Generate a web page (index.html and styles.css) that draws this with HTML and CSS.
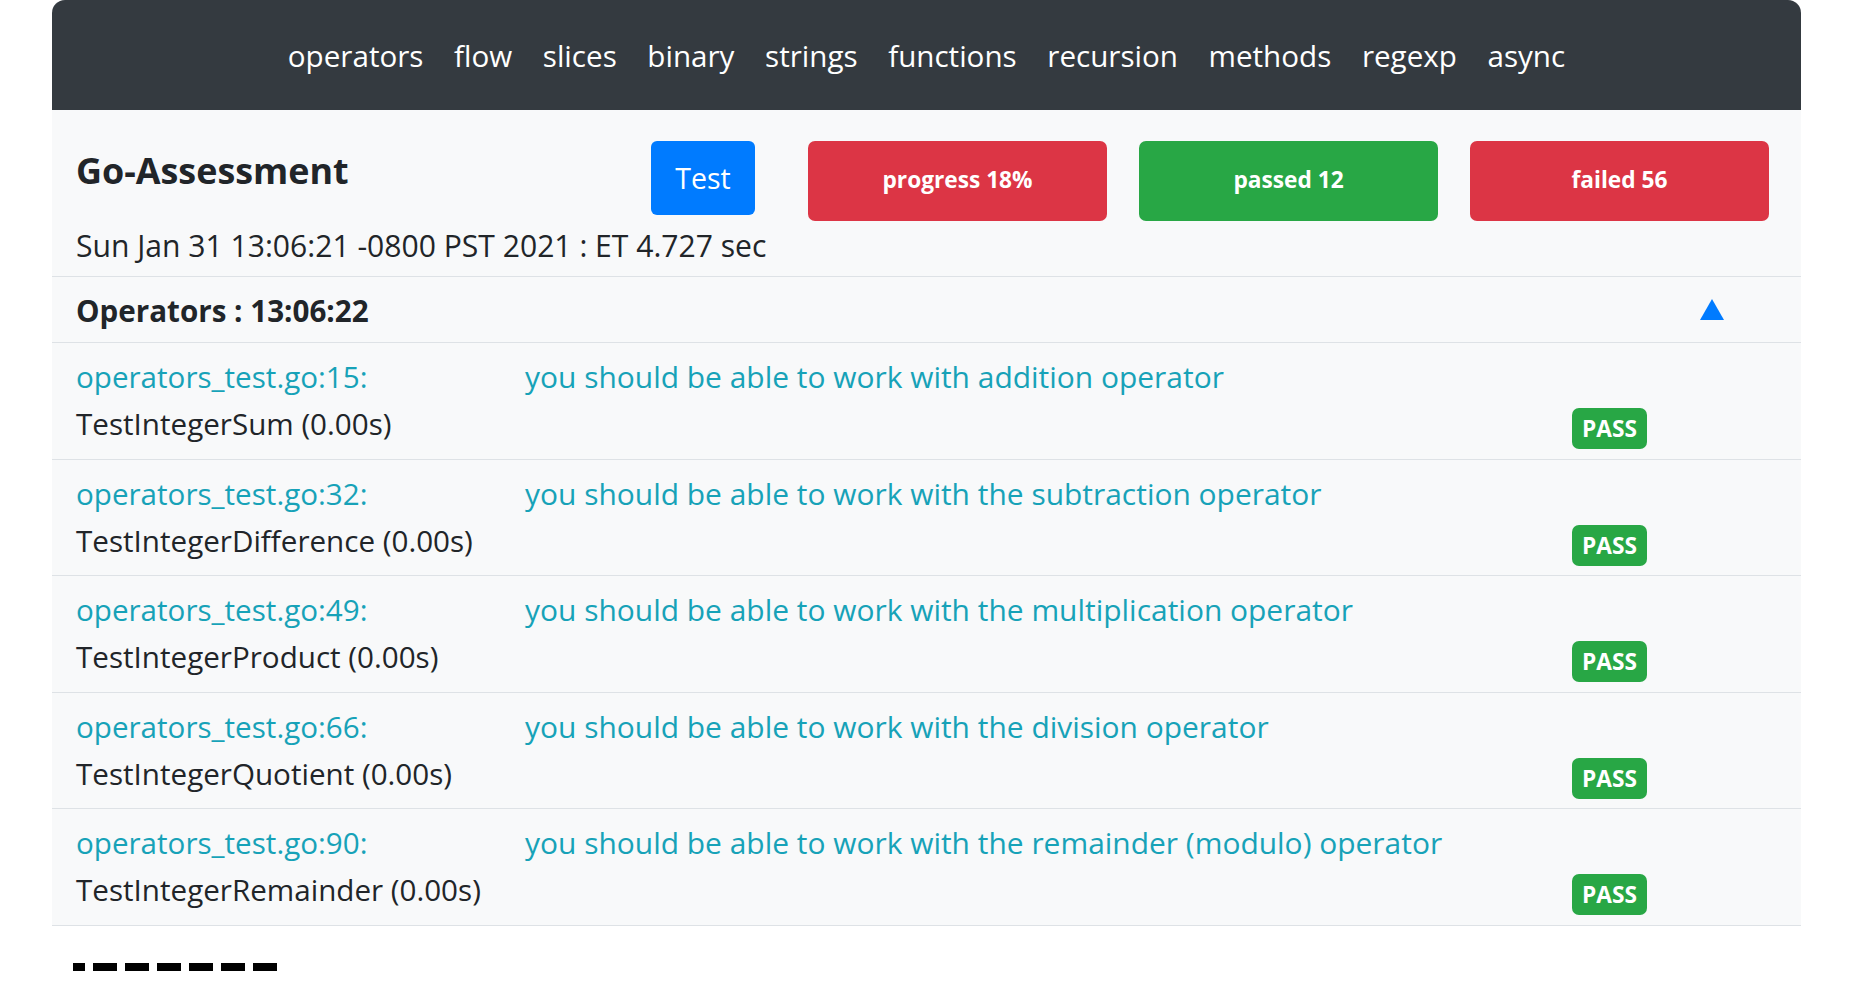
FILE: index.html
```html
<!DOCTYPE html>
<html lang="en">
<head>
<meta charset="utf-8">
<title>Go-Assessment</title>
<link rel="stylesheet" href="styles.css">
</head>
<body>
<div class="page">
  <nav class="topnav">
    <a class="navlink" href="#">operators</a>
    <a class="navlink" href="#">flow</a>
    <a class="navlink" href="#">slices</a>
    <a class="navlink" href="#">binary</a>
    <a class="navlink" href="#">strings</a>
    <a class="navlink" href="#">functions</a>
    <a class="navlink" href="#">recursion</a>
    <a class="navlink" href="#">methods</a>
    <a class="navlink" href="#">regexp</a>
    <a class="navlink" href="#">async</a>
  </nav>

  <header class="summary">
    <div class="summary-top">
      <h1 class="title">Go-Assessment</h1>
      <button class="btn-test" type="button">Test</button>
      <div class="stats">
        <div class="stat stat-red">progress 18%</div>
        <div class="stat stat-green">passed 12</div>
        <div class="stat stat-red">failed 56</div>
      </div>
    </div>
    <div class="summary-date">Sun Jan 31 13:06:21 -0800 PST 2021 : ET 4.727 sec</div>
  </header>

  <section class="suite">
    <div class="suite-head">
      <span class="suite-title">Operators : 13:06:22</span>
      <svg class="toggle" width="24" height="21" viewBox="0 0 24 21"><polygon points="12,0 24,21 0,21" fill="#007bff"/></svg>
    </div>

    <div class="case">
      <span class="case-file">operators_test.go:15:</span>
      <span class="case-msg">you should be able to work with addition operator</span>
      <span class="case-name">TestIntegerSum (0.00s)</span>
      <span class="badge-pass">PASS</span>
    </div>
    <div class="case">
      <span class="case-file">operators_test.go:32:</span>
      <span class="case-msg">you should be able to work with the subtraction operator</span>
      <span class="case-name">TestIntegerDifference (0.00s)</span>
      <span class="badge-pass">PASS</span>
    </div>
    <div class="case">
      <span class="case-file">operators_test.go:49:</span>
      <span class="case-msg">you should be able to work with the multiplication operator</span>
      <span class="case-name">TestIntegerProduct (0.00s)</span>
      <span class="badge-pass">PASS</span>
    </div>
    <div class="case">
      <span class="case-file">operators_test.go:66:</span>
      <span class="case-msg">you should be able to work with the division operator</span>
      <span class="case-name">TestIntegerQuotient (0.00s)</span>
      <span class="badge-pass">PASS</span>
    </div>
    <div class="case">
      <span class="case-file">operators_test.go:90:</span>
      <span class="case-msg">you should be able to work with the remainder (modulo) operator</span>
      <span class="case-name">TestIntegerRemainder (0.00s)</span>
      <span class="badge-pass">PASS</span>
    </div>
  </section>

  <div class="dashes"></div>
</div>
</body>
</html>
```

FILE: styles.css
```css
html, body {
  margin: 0;
  padding: 0;
  background: #ffffff;
}
body {
  font-family: "Open Sans", "Noto Sans", sans-serif;
  font-size: 29.6px;
  line-height: 47px;
  color: #212529;
}
.page {
  margin-left: 52px;
  width: 1749px;
}
.topnav {
  height: 110px;
  background: #343a40;
  border-radius: 13px 13px 0 0;
  display: flex;
  justify-content: center;
  align-items: center;
}
.navlink {
  color: #ffffff;
  text-decoration: none;
  padding: 0 15.3px;
}
.summary {
  background: #f8f9fa;
  padding: 31px 32px 7px 24px;
  border-bottom: 1px solid #dee2e6;
}
.summary-top {
  display: flex;
  align-items: flex-start;
}
.title {
  margin: 0;
  width: 575px;
  flex: 0 0 575px;
  font-size: 35.9px;
  font-weight: 700;
  line-height: 60px;
}
.btn-test {
  width: 104px;
  height: 74px;
  margin-right: 53px;
  border: none;
  border-radius: 6px;
  background: #007bff;
  color: #fff;
  font-family: inherit;
  font-size: 28.5px;
  padding: 0;
}
.stats {
  display: flex;
  gap: 32px;
}
.stat {
  width: 299px;
  height: 80px;
  border-radius: 7px;
  color: #fff;
  font-weight: 700;
  font-size: 22.7px;
  display: flex;
  align-items: center;
  justify-content: center;
  padding-bottom: 3px;
  box-sizing: border-box;
}
.stat-red { background: #dc3545; }
.stat-green { background: #28a745; }
.summary-date {
  margin-top: 1px;
  font-size: 30.1px;
}
.suite {
  background: #f8f9fa;
}
.suite-head {
  height: 65px;
  padding: 0 77px 0 24px;
  display: flex;
  align-items: center;
  justify-content: space-between;
  border-bottom: 1px solid #dee2e6;
}
.suite-title {
  font-weight: 700;
  padding-top: 2px;
}
.case {
  display: grid;
  grid-template-columns: 449px 1047px auto;
  padding: 10px 24px 11.6px;
  border-bottom: 1px solid #dee2e6;
}
.case-file { color: #17a2b8; grid-column: 1; grid-row: 1; }
.case-msg { color: #17a2b8; grid-column: 2 / 4; grid-row: 1; white-space: nowrap; font-size: 29.95px; }
.case-name { grid-column: 1 / 3; grid-row: 2; }
.badge-pass {
  grid-column: 3;
  grid-row: 2;
  align-self: end;
  justify-self: start;
  background: #28a745;
  color: #fff;
  font-weight: 700;
  font-size: 22.7px;
  line-height: 41px;
  padding: 0 10px;
  border-radius: 7px;
  margin-bottom: -2px;
}
.dashes {
  margin: 37px 0 0 21px;
  width: 204px;
  height: 8px;
  background: repeating-linear-gradient(90deg, #000 0 24px, transparent 24px 32px);
  background-position: -12px 0;
}
```
